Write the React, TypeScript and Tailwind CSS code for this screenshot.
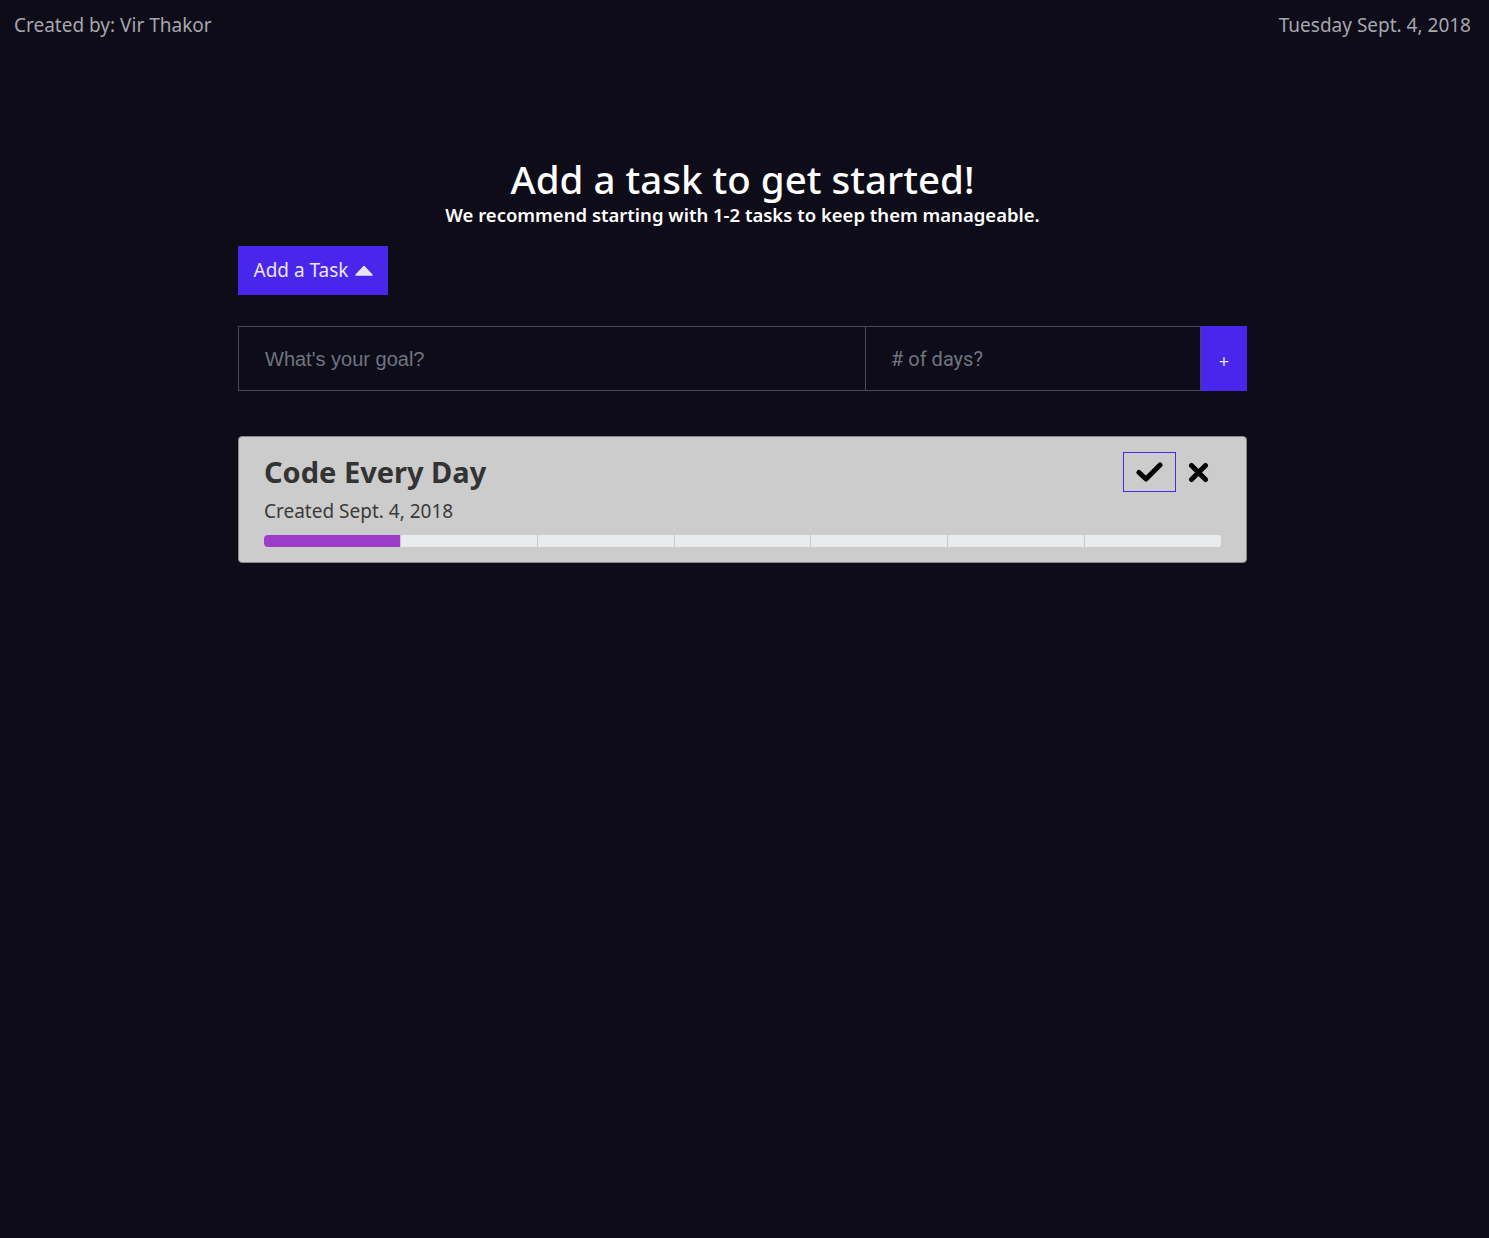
import React from "react";

const segs = [1, 0, 0, 0, 0, 0, 0];

export default function App() {
  return (
    <div className="min-h-[1238px] w-full bg-[#0e0c18] text-white" style={{ fontFamily: '"Noto Sans", "Open Sans", sans-serif' }}>
      <div className="flex justify-between px-[14px] pt-[11px] pr-[18px] text-[19px] leading-[28px] text-[#a6a6ad]">
        <span>Created by: Vir Thakor</span>
        <span>Tuesday Sept. 4, 2018</span>
      </div>
      <div className="ml-[238px] mt-[118px] w-[1009px]">
        <h1 className="text-center text-[38.5px] font-medium leading-[44px] text-white">Add a task to get started!</h1>
        <p className="mt-[2px] text-center text-[18.5px] font-semibold leading-[24px] text-white">We recommend starting with 1-2 tasks to keep them manageable.</p>
        <button className="mt-[19px] flex h-[49px] w-[150px] items-center justify-center gap-[6px] bg-[#4826ec] text-[19px] text-[#ece4f2]">
          <span>Add a Task</span>
          <svg width="18" height="11" viewBox="0 0 18 11"><path d="M1 10 L9 1.5 L17 10 Z" fill="#ece4f2" stroke="#ece4f2" strokeWidth="1.5" strokeLinejoin="round" /></svg>
        </button>
        <div className="mt-[31px] flex h-[65px]">
          <div className="flex w-[628px] items-center border border-[#4a4852] pl-[26px] text-[20px] text-[#6f7580]" style={{ fontFamily: '"Liberation Sans", Arial, sans-serif' }}>
            What's your goal?
          </div>
          <div className="flex w-[335px] items-center border-y border-r border-[#4a4852] pl-[25px] text-[20px] text-[#6f7580]" style={{ fontFamily: 'Roboto, sans-serif' }}>
            # of days?
          </div>
          <div className="flex w-[46px] items-center justify-center bg-[#4826ec] pt-[6px] text-[18px] text-[#e8e0f0]">+</div>
        </div>
        <div className="mt-[45px] rounded-[4px] border border-[#8a8a8a] bg-[#cccccc] px-[25px] pb-[15px] pt-[15px]">
          <div className="flex items-start justify-between">
            <div>
              <div className="text-[29px] font-bold leading-[40px] text-[#333333]">Code Every Day</div>
              <div className="mt-[6px] text-[19px] leading-[26px] text-[#3a3a3a]">Created Sept. 4, 2018</div>
            </div>
            <div className="mr-[12px] flex items-center gap-[12px]">
              <div className="flex h-[40px] w-[53px] items-center justify-center border border-[#4a2ae8]">
                <svg width="27" height="22" viewBox="0 0 27 22"><path d="M3 11.5 L10 18 L24 4" fill="none" stroke="#000" strokeWidth="5" strokeLinecap="round" strokeLinejoin="round" /></svg>
              </div>
              <svg width="21" height="21" viewBox="0 0 21 21"><path d="M3.5 3.5 L17.5 17.5 M17.5 3.5 L3.5 17.5" fill="none" stroke="#000" strokeWidth="5" strokeLinecap="round" /></svg>
            </div>
          </div>
          <div className="mt-[11px] flex h-[12px] overflow-hidden rounded-[4px] bg-[#e8ebee]">
            {segs.map((s, i) => (
              <div key={i} className={`flex-1 ${s ? "bg-[#9b3dc8]" : "bg-[#e8ebee]"} ${i > 0 ? "border-l border-[#c8c8c8]" : ""}`} />
            ))}
          </div>
        </div>
      </div>
    </div>
  );
}
